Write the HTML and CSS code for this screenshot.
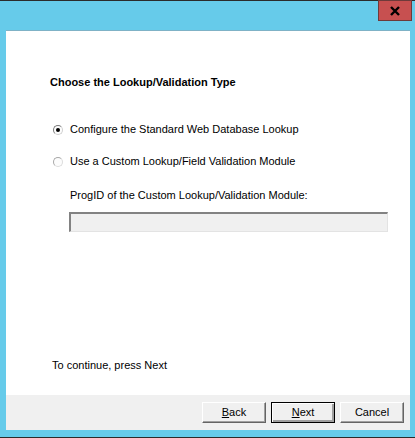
FILE: index.html
```html
<!Doctype html>
<html>
<head>
    <meta charset="UTF-8">
    <title>Lookup Wizard</title>
    <link rel="stylesheet" href="styles.css">
</head>
<body>
<div class="window">
    <div class="titlebar">
        <div class="close">
            <svg width="12" height="10" viewBox="0 0 12 10">
                <path d="M2 1 L10 9 M10 1 L2 9" stroke="#000" stroke-width="2.4"/>
            </svg>
        </div>
    </div>
    <div class="client">
        <div class="content">
            <h1 class="heading">Choose the Lookup/Validation Type</h1>
            <div class="options">
                <label class="radio"><span class="dot checked"></span>Configure the Standard Web Database Lookup</label>
                <label class="radio"><span class="dot"></span>Use a Custom Lookup/Field Validation Module</label>
            </div>
            <div class="progid">
                <div class="caption">ProgID of the Custom Lookup/Validation Module:</div>
                <div class="field"></div>
            </div>
            <div class="hint">To continue, press Next</div>
        </div>
        <div class="buttons">
            <div class="btn"><u>B</u>ack</div>
            <div class="btn default"><u>N</u>ext</div>
            <div class="btn">Cancel</div>
        </div>
    </div>
</div>
</body>
</html>
```

FILE: styles.css
```css
body{
    margin: 0;
    padding: 0;
}
.window{
    width: 415px;height: 438px;
    box-sizing: border-box;
    background-color: #66cbea;
    border-top: 1px solid #2b2b2b;
    border-bottom: 1px solid #2b2b2b;
    display: flex;
    flex-direction: column;
    font-family: "Liberation Sans", Arial, sans-serif;
    font-size: 11px;
    color: #000;
}
.titlebar{
    height: 29px;
    display: flex;
    justify-content: flex-end;
    align-items: flex-start;
    padding-right: 3px;
}
.close{
    width: 32px;height: 19px;
    margin-top: -1px;
    background-color: #c75050;
    border: 1px solid #6e3a3a;
    display: flex;
    align-items: center;
    justify-content: center;
}
.client{
    width: 404px;height: 400px;
    margin-left: 6px;
    display: flex;
    flex-direction: column;
}
.content{
    flex: 1;
    background-color: #fff;
    border-top: 1px solid #7fb2c6;
    padding-left: 44px;
    display: flex;
    flex-direction: column;
}
.heading{
    margin: 45px 0 0 0;
    font-size: 11px;
    font-weight: bold;
    line-height: 13px;
}
.options{
    margin-top: 34px;
    display: flex;
    flex-direction: column;
    gap: 19px;
}
.radio{
    display: flex;
    align-items: center;
    gap: 7px;
    line-height: 13px;
    padding-left: 3px;
}
.dot{
    width: 10px;height: 10px;
    box-sizing: border-box;
    border: 1px solid #a8a8a8;
    border-right-color: #dcdcdc;
    border-bottom-color: #dcdcdc;
    border-radius: 50%;
    background-color: #fcfcfc;
    position: relative;
}
.dot.checked{
    border-color: #7a7a7a #d0d0d0 #d0d0d0 #7a7a7a;
}
.dot.checked::after{
    content: "";
    position: absolute;
    left: 2px;top: 2px;
    width: 4px;height: 4px;
    border-radius: 50%;
    background-color: #000;
}
.progid{
    margin-top: 21px;
    padding-left: 20px;
}
.caption{
    line-height: 13px;
}
.field{
    margin-top: 10px;
    width: 319px;height: 20px;
    box-sizing: border-box;
    background-color: #f0f0f0;
    border-top: 2px solid #828282;
    border-left: 2px solid #828282;
    border-right: 1px solid #e3e3e3;
    border-bottom: 1px solid #e3e3e3;
    margin-left: -1px;
}
.hint{
    margin-top: auto;
    margin-bottom: 23px;
    margin-left: 2px;
    line-height: 13px;
}
.buttons{
    height: 35px;
    background-color: #f0f0f0;
    display: flex;
    justify-content: flex-end;
    align-items: flex-start;
    gap: 5px;
    padding: 7px 6px 0 0;
    box-sizing: border-box;
}
.btn{
    width: 64px;height: 21px;
    box-sizing: border-box;
    background-color: #f0f0f0;
    border: 1px solid;
    border-color: #fff #646464 #646464 #fff;
    box-shadow: inset -1px -1px 0 #a0a0a0;
    display: flex;
    align-items: center;
    justify-content: center;
    line-height: 13px;
}
.btn.default{
    border: 1px solid #000;
    box-shadow: inset 1px 1px 0 #fff, inset -2px -2px 0 #a0a0a0;
}
```
